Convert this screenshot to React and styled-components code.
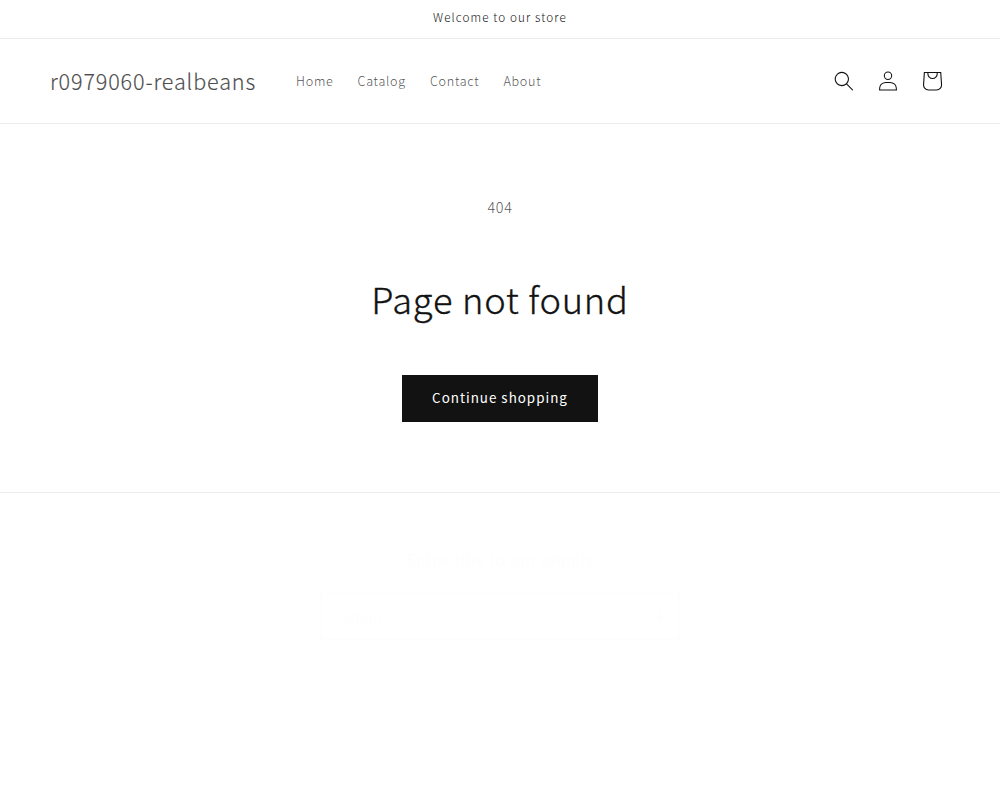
import React from 'react';
import styled, { createGlobalStyle } from 'styled-components';

const Global = createGlobalStyle`
  *, *::before, *::after { box-sizing: border-box; }
  html { background: #fff; }
  body {
    margin: 0;
    overflow: hidden;
    color: rgba(18, 18, 18, 0.75);
    background: #fff;
    font-family: "Noto Sans CJK SC", "Noto Sans", sans-serif;
    font-weight: 300;
  }
  a { color: inherit; text-decoration: none; }
`;

const Page = styled.div`
  height: 787px;
  overflow: hidden;
`;

const Announcement = styled.div`
  height: 39px;
  padding-top: 5px;
  border-bottom: 1px solid #ebebeb;
  text-align: center;
  color: #121212;
  font-size: 11.7px;
  line-height: 23px;
  letter-spacing: 1.1px;
`;

const Header = styled.header`
  height: 85px;
  padding: 0 46px 0 50px;
  display: flex;
  align-items: center;
  border-bottom: 1px solid #ebebeb;
`;

const Logo = styled.a`
  font-size: 21.6px;
  -webkit-text-stroke: 0.2px currentColor;
  line-height: 30px;
  letter-spacing: 0.85px;
`;

const Nav = styled.nav`
  display: flex;
  gap: 24px;
  margin-left: 40px;
  font-size: 12.6px;
  line-height: 24px;
  letter-spacing: 0.72px;
`;

const Icons = styled.div`
  display: flex;
  margin-left: auto;
  color: #121212;
`;

const IconButton = styled.a`
  width: 44px;
  height: 44px;
  display: flex;
  align-items: center;
  justify-content: center;

  svg {
    width: ${({ $size }) => $size}px;
    height: ${({ $size }) => $size}px;
    fill: currentColor;
  }
`;

const Main = styled.main`
  height: 369px;
  padding-top: 69px;
  display: flex;
  flex-direction: column;
  align-items: center;
  border-bottom: 1px solid #ebebeb;
`;

const Code = styled.p`
  margin: 0;
  font-size: 14.4px;
  line-height: 28px;
  letter-spacing: 0.7px;
`;

const Title = styled.h1`
  margin: 51px 0 0;
  color: #121212;
  font-size: 36.2px;
  font-weight: 300;
  -webkit-text-stroke: 0.35px currentColor;
  line-height: 52px;
  letter-spacing: 0.8px;
`;

const Button = styled.a`
  width: 196px;
  height: 47px;
  margin-top: 51px;
  background: #121212;
  && { color: #fff; }
  text-align: center;
  font-size: 13.4px;
  font-weight: 400;
  line-height: 44px;
  letter-spacing: 1px;
`;

const Newsletter = styled.footer`
  padding-top: 54px;
  display: flex;
  flex-direction: column;
  align-items: center;
  color: #121212;
  opacity: 0.0045;
`;

const NewsletterTitle = styled.h2`
  margin: 0 0 22px;
  font-size: 16.2px;
  font-weight: 300;
  line-height: 24px;
  letter-spacing: 0.7px;
`;

const EmailField = styled.div`
  width: 360px;
  height: 47px;
  padding: 0 15px 0 21px;
  display: flex;
  align-items: center;
  justify-content: space-between;
  border: 1px solid #121212;
  font-size: 14.4px;
  letter-spacing: 0.6px;

  svg { width: 14px; fill: currentColor; }
`;

const links = ['Home', 'Catalog', 'Contact', 'About'];

export default function App() {
  return (
    <Page>
      <Global />
      <Announcement>Welcome to our store</Announcement>
      <Header>
        <Logo href="#">r0979060-realbeans</Logo>
        <Nav>
          {links.map((label) => <a href="#" key={label}>{label}</a>)}
        </Nav>
        <Icons>
          <IconButton href="#" aria-label="Search" $size={20}>
            <svg viewBox="0 0 18 19">
              <path fillRule="evenodd" clipRule="evenodd" d="M11.03 11.68A5.784 5.784 0 112.85 3.5a5.784 5.784 0 018.18 8.18zm.26 1.12a6.78 6.78 0 11.72-.7l5.4 5.4a.5.5 0 11-.71.7l-5.41-5.4z" />
            </svg>
          </IconButton>
          <IconButton href="#" aria-label="Log in" $size={20}>
            <svg viewBox="0 0 18 19">
              <path fillRule="evenodd" clipRule="evenodd" d="M6 4.5a3 3 0 116 0 3 3 0 01-6 0zm3-4a4 4 0 100 8 4 4 0 000-8zm5.58 12.15c1.12.82 1.83 2.24 1.91 4.85H1.51c.08-2.6.79-4.03 1.9-4.85C4.66 11.75 6.5 11.5 9 11.5s4.35.26 5.58 1.15zM9 10.5c-2.5 0-4.65.24-6.17 1.35C1.27 12.98.5 14.93.5 18v.5h17V18c0-3.07-.77-5.02-2.33-6.15-1.52-1.1-3.67-1.35-6.17-1.35z" />
            </svg>
          </IconButton>
          <IconButton href="#" aria-label="Cart" $size={44}>
            <svg viewBox="0 0 40 40">
              <path fillRule="evenodd" d="M15.75 11.8h-3.16l-.77 11.6a5 5 0 0 0 4.99 5.34h7.38a5 5 0 0 0 4.99-5.33L28.4 11.8zm0 1h-2.22l-.71 10.67a4 4 0 0 0 3.99 4.27h7.38a4 4 0 0 0 4-4.27l-.72-10.67h-2.22v.63a4.75 4.75 0 1 1-9.5 0zm8.5 0h-7.5v.63a3.75 3.75 0 1 0 7.5 0z" />
            </svg>
          </IconButton>
        </Icons>
      </Header>
      <Main>
        <Code>404</Code>
        <Title>Page not found</Title>
        <Button href="#">Continue shopping</Button>
      </Main>
      <Newsletter>
        <NewsletterTitle>Subscribe to our emails</NewsletterTitle>
        <EmailField>
          <span>Email</span>
          <svg viewBox="0 0 14 10">
            <path fillRule="evenodd" d="M8.537.808a.5.5 0 01.817-.162l4 4a.5.5 0 010 .708l-4 4a.5.5 0 11-.708-.708L11.793 5.5H1a.5.5 0 010-1h10.793L8.646 1.354a.5.5 0 01-.109-.546z" />
          </svg>
        </EmailField>
      </Newsletter>
    </Page>
  );
}
